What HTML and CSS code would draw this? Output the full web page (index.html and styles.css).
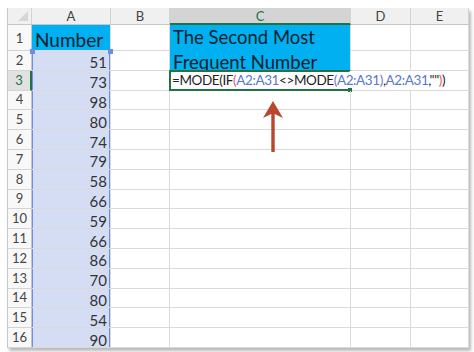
FILE: index.html
```html
<!DOCTYPE html>
<html>
  <head>
    <link rel="stylesheet" href="styles.css">
  </head>
  <body>
    <div class="wrap">
      <div class="sheet">
        <div class="corner"><span class="tri"></span></div>
        <div class="colhead">A</div>
        <div class="colhead">B</div>
        <div class="colhead cur">C</div>
        <div class="colhead">D</div>
        <div class="colhead">E</div>

        <div class="rowhead tall">1</div>
        <div class="cell title">Number</div>
        <div class="cell"></div>
        <div class="cell merged">The Second Most<br>Frequent Number</div>
        <div class="cell"></div>
        <div class="cell"></div>

        <div class="rowhead">2</div>
        <div class="cell num sel first">51</div>
        <div class="cell"></div>
        <div class="cell"></div>
        <div class="cell"></div>

        <div class="rowhead cur">3</div>
        <div class="cell num sel">73</div>
        <div class="cell"></div>
        <div class="cell editcell">
          <div class="edit"><span class="k">=MODE(IF</span><span class="p1">(</span><span class="ref">A2:A31</span><span class="k">&lt;&gt;MODE</span><span class="p2">(</span><span class="ref">A2:A31</span><span class="p2">)</span><span class="k">,</span><span class="ref">A2:A31</span><span class="k">,""</span><span class="p1">)</span><span class="k">)</span><span class="caret"></span></div>
        </div>

        <div class="rowhead">4</div><div class="cell num sel">98</div><div class="cell"></div><div class="cell"></div><div class="cell"></div><div class="cell"></div>
        <div class="rowhead">5</div><div class="cell num sel">80</div><div class="cell"></div><div class="cell"></div><div class="cell"></div><div class="cell"></div>
        <div class="rowhead">6</div><div class="cell num sel">74</div><div class="cell"></div><div class="cell"></div><div class="cell"></div><div class="cell"></div>
        <div class="rowhead">7</div><div class="cell num sel">79</div><div class="cell"></div><div class="cell"></div><div class="cell"></div><div class="cell"></div>
        <div class="rowhead">8</div><div class="cell num sel">58</div><div class="cell"></div><div class="cell"></div><div class="cell"></div><div class="cell"></div>
        <div class="rowhead">9</div><div class="cell num sel">66</div><div class="cell"></div><div class="cell"></div><div class="cell"></div><div class="cell"></div>
        <div class="rowhead">10</div><div class="cell num sel">59</div><div class="cell"></div><div class="cell"></div><div class="cell"></div><div class="cell"></div>
        <div class="rowhead">11</div><div class="cell num sel">66</div><div class="cell"></div><div class="cell"></div><div class="cell"></div><div class="cell"></div>
        <div class="rowhead">12</div><div class="cell num sel">86</div><div class="cell"></div><div class="cell"></div><div class="cell"></div><div class="cell"></div>
        <div class="rowhead">13</div><div class="cell num sel">70</div><div class="cell"></div><div class="cell"></div><div class="cell"></div><div class="cell"></div>
        <div class="rowhead">14</div><div class="cell num sel">80</div><div class="cell"></div><div class="cell"></div><div class="cell"></div><div class="cell"></div>
        <div class="rowhead">15</div><div class="cell num sel">54</div><div class="cell"></div><div class="cell"></div><div class="cell"></div><div class="cell"></div>
        <div class="rowhead">16</div><div class="cell num sel">90</div><div class="cell"></div><div class="cell"></div><div class="cell"></div><div class="cell"></div>
      </div>

      <!-- annotation arrow pointing at the formula -->
      <svg class="arrow" width="22" height="54" viewBox="0 0 22 54">
        <path d="M11 1 L21 18 L12.7 14 L12.7 52 L9.3 52 L9.3 14 L1 18 Z" fill="#b9472d"/>
      </svg>
    </div>
  </body>
</html>
```

FILE: styles.css
```css
body {
  margin: 0;
  background: #fff;
  font-family: Lato, "Open Sans", sans-serif;
}
* {
  box-sizing: border-box;
}
.wrap {
  position: relative;
  padding: 8px 0 0 7px;
  width: 474px;
  height: 352px;
  overflow: hidden;
}
/* Spreadsheet grid */
.sheet {
  display: grid;
  grid-template-columns: 25px 79px 59px 181px 60px 58px;
  grid-template-rows: 17px 26px repeat(15, 19.8px);
  width: 462px;
  box-shadow: 2px 3px 3px rgba(0, 0, 0, 0.28);
}
.corner,
.colhead {
  background: #f0f0f0;
  border-right: 1px solid #d4d4d4;
  border-bottom: 1px solid #c6c6c6;
  color: #444;
  font-size: 13px;
  display: flex;
  align-items: center;
  justify-content: center;
}
.corner {
  border-left: 1px solid #c8c8c8;
  position: relative;
}
.tri {
  position: absolute;
  right: 3px;
  bottom: 3px;
  width: 0;
  height: 0;
  border-left: 10px solid transparent;
  border-bottom: 10px solid #d6d6d6;
}
.colhead.cur {
  background: #d4d4d4;
  color: #217346;
  border-bottom: 2px solid #217346;
}
.rowhead {
  background: #f8f8f8;
  border-left: 1px solid #c8c8c8;
  border-right: 1px solid #c6c6c6;
  border-bottom: 1px solid #d4d4d4;
  color: #444;
  font-size: 13px;
  display: flex;
  align-items: flex-end;
  justify-content: center;
  padding-bottom: 2px;
}
.rowhead.tall {
  padding-bottom: 4px;
}
.rowhead.cur {
  background: #e1e1e1;
  color: #217346;
  border-right: 2px solid #217346;
}
.cell {
  border-right: 1px solid #dadada;
  border-bottom: 1px solid #dadada;
  display: flex;
  align-items: center;
  position: relative;
}
.title {
  background: #00b0f0;
  font-size: 19px;
  color: #10202c;
  padding: 3px 0 0 3px;
}
.merged {
  grid-row: span 2;
  background: #00b0f0;
  font-size: 18.5px;
  line-height: 25px;
  color: #10202c;
  padding: 0 0 0 3px;
  align-items: flex-start;
}
.num {
  justify-content: flex-end;
  padding: 4px 3px 0 0;
  font-size: 15px;
  color: #333;
}
/* Referenced range highlight */
.sel {
  background: #d5ddf5;
  box-shadow: inset 1px 0 #6d8ee0, inset -1px 0 #6d8ee0;
}
.sel.first::before,
.sel.first::after {
  content: "";
  position: absolute;
  top: -2px;
  width: 5px;
  height: 5px;
  background: #6d8ee0;
}
.sel.first::before {
  left: -2px;
}
.sel.first::after {
  right: -3px;
}
/* Cell in edit mode */
.editcell {
  grid-column: span 3;
  align-items: stretch;
  overflow: visible;
}
.edit {
  width: 182px;
  margin: -1px 0 -1px -1px;
  border: 2px solid #217346;
  border-right-color: transparent;
  white-space: nowrap;
  font-size: 13.5px;
  letter-spacing: -0.4px;
  color: #222;
  display: flex;
  align-items: center;
  padding: 0 0 1px 1px;
  position: relative;
}
.edit::after {
  content: "";
  position: absolute;
  right: -3px;
  bottom: -3px;
  width: 4px;
  height: 4px;
  background: #217346;
}
.ref {
  color: #5877cf;
}
.p1 {
  color: #e0605a;
}
.p2 {
  color: #7a72cc;
}
.caret {
  display: inline-block;
  width: 1px;
  height: 17px;
  margin-left: 3px;
  background: #222;
}
.arrow {
  position: absolute;
  left: 262px;
  top: 100px;
}
```
